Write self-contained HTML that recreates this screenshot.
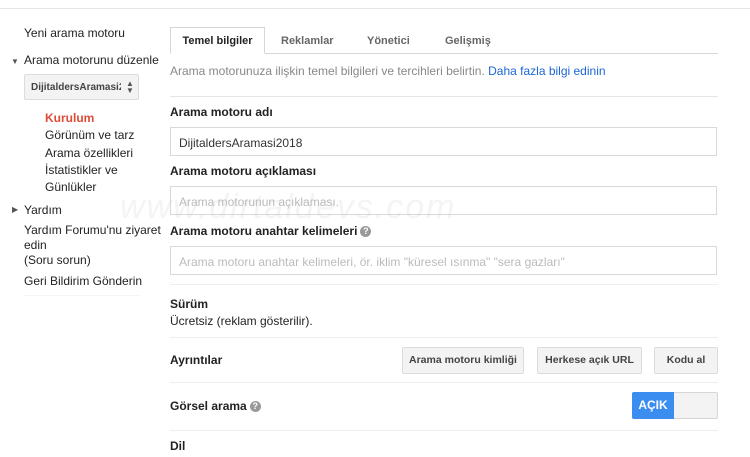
<!DOCTYPE html>
<html><head><meta charset="utf-8"><style>
*{margin:0;padding:0;box-sizing:border-box}
body{width:750px;height:457px;overflow:hidden;background:#fff;font-family:"Liberation Sans",Arial,sans-serif;color:#222;position:relative}
.a{position:absolute;white-space:nowrap}
.l{font-size:12px;color:#222}
.b{font-weight:bold;font-size:12px;color:#222}
.hr{position:absolute;height:1px;background:#e5e5e5}
.inp{position:absolute;left:170px;width:547px;height:29px;border:1px solid #d9d9d9;font-size:12px;padding:8px 0 0 8px;color:#bbb}
.btn{position:absolute;top:347px;height:27px;border:1px solid #dcdcdc;background:#f3f3f3;font-size:10.5px;font-weight:bold;color:#444;text-align:center;line-height:25px;border-radius:2px}
.q{display:inline-block;width:11px;height:11px;border-radius:50%;background:#999;color:#fff;font-size:9px;line-height:11px;text-align:center;vertical-align:1px;margin-left:3px}
</style></head><body>
<div class="hr" style="left:0;top:8px;width:750px"></div>
<div class="a l" style="left:24px;top:26px">Yeni arama motoru</div>
<div class="a" style="left:11px;top:57px;font-size:8px;color:#555">▼</div>
<div class="a l" style="left:24px;top:53px">Arama motorunu düzenle</div>
<div class="a" style="left:24px;top:74px;width:115px;height:26px;border:1px solid #dcdcdc;background:#f3f3f3;border-radius:2px;font-size:10px;font-weight:bold;color:#444;padding:7px 0 0 6px;overflow:hidden">DijitaldersAramasi2018</div>
<div class="a" style="left:121px;top:75px;width:17px;height:24px;background:#f3f3f3;font-size:8px;line-height:7px;color:#555;padding:5px 0 0 5px">▲<br>▼</div>
<div class="a" style="left:45px;top:111px;font-size:12px;font-weight:bold;color:#dd4b39">Kurulum</div>
<div class="a l" style="left:45px;top:128px">Görünüm ve tarz</div>
<div class="a l" style="left:45px;top:146px">Arama özellikleri</div>
<div class="a l" style="left:45px;top:163px">İstatistikler ve</div>
<div class="a l" style="left:45px;top:180px">Günlükler</div>
<div class="a" style="left:12px;top:205px;font-size:8px;color:#555">▶</div>
<div class="a l" style="left:24px;top:203px">Yardım</div>
<div class="a l" style="left:24px;top:223px">Yardım Forumu'nu ziyaret</div>
<div class="a l" style="left:24px;top:238px">edin</div>
<div class="a l" style="left:24px;top:253px">(Soru sorun)</div>
<div class="a l" style="left:24px;top:274px">Geri Bildirim Gönderin</div>
<div class="hr" style="left:24px;top:295px;width:117px;background:#f5f5f5"></div>

<div class="hr" style="left:170px;top:53px;width:548px;background:#d6d6d6"></div>
<div class="a" style="left:170px;top:27px;width:95px;height:27px;border:1px solid #d6d6d6;border-bottom:1px solid #fff;background:#fff;font-size:11px;font-weight:bold;color:#222;text-align:center;line-height:26px">Temel bilgiler</div>
<div class="a" style="left:281px;top:35px;font-size:11px;font-weight:bold;color:#666">Reklamlar</div>
<div class="a" style="left:367px;top:35px;font-size:11px;font-weight:bold;color:#666">Yönetici</div>
<div class="a" style="left:445px;top:35px;font-size:11px;font-weight:bold;color:#666">Gelişmiş</div>
<div class="a" style="left:170px;top:64px;font-size:12px;color:#888">Arama motorunuza ilişkin temel bilgileri ve tercihleri belirtin. <span style="color:#1a66d6">Daha fazla bilgi edinin</span></div>
<div class="hr" style="left:170px;top:96px;width:548px"></div>
<div class="a b" style="left:170px;top:105px">Arama motoru adı</div>
<div class="inp" style="top:127px;color:#333">DijitaldersAramasi2018</div>
<div class="a b" style="left:170px;top:164px">Arama motoru açıklaması</div>
<div class="inp" style="top:186px">Arama motorunun açıklaması.</div>
<div class="a b" style="left:170px;top:224px">Arama motoru anahtar kelimeleri<span class="q">?</span></div>
<div class="inp" style="top:246px">Arama motoru anahtar kelimeleri, ör. iklim "küresel ısınma" "sera gazları"</div>
<div class="hr" style="left:170px;top:284px;width:548px;background:#eee"></div>
<div class="a b" style="left:170px;top:297px">Sürüm</div>
<div class="a l" style="left:170px;top:314px">Ücretsiz (reklam gösterilir).</div>
<div class="hr" style="left:170px;top:337px;width:548px;background:#eee"></div>
<div class="a b" style="left:170px;top:353px">Ayrıntılar</div>
<div class="btn" style="left:402px;width:122px">Arama motoru kimliği</div>
<div class="btn" style="left:537px;width:105px">Herkese açık URL</div>
<div class="btn" style="left:654px;width:64px">Kodu al</div>
<div class="hr" style="left:170px;top:382px;width:548px;background:#eee"></div>
<div class="a b" style="left:170px;top:399px">Görsel arama<span class="q">?</span></div>
<div class="a" style="left:632px;top:392px;width:86px;height:27px;border:1px solid #d6d6d6;background:#f3f3f3;border-radius:2px"></div>
<div class="a" style="left:632px;top:392px;width:42px;height:27px;background:#3b8ef0;color:#fff;font-size:12px;font-weight:bold;text-align:center;line-height:27px;border-radius:2px 0 0 2px">AÇIK</div>
<div class="hr" style="left:170px;top:430px;width:548px;background:#eee"></div>
<div class="a b" style="left:170px;top:439px">Dil</div>
<div class="a" style="left:120px;top:188px;font-size:34px;font-style:italic;color:rgba(200,200,200,0.2);letter-spacing:2px">www.dirtaldevs.com</div>
</body></html>
